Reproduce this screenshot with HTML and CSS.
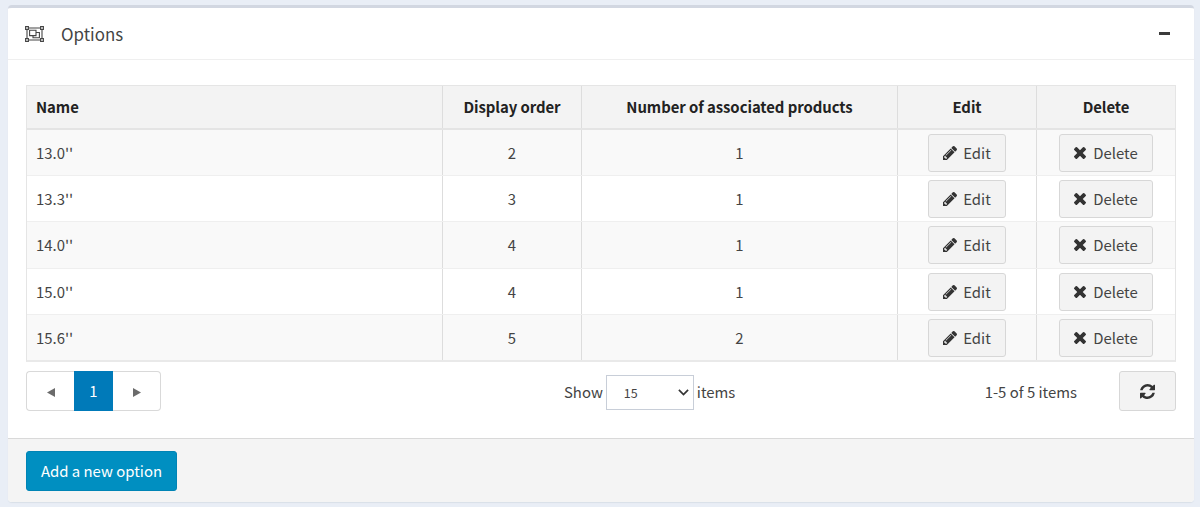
FILE: index.html
```
<!DOCTYPE html>
<html lang="en">
<head>
<meta charset="utf-8">
<title>Options</title>
<link rel="stylesheet" href="styles.css">
</head>
<body>
<svg class="defs" aria-hidden="true">
  <symbol id="pencil" viewBox="128 149 1515 1515"><path d="M491 1536l91-91-235-235-91 91v107h128v128h107zm523-928q0-22-22-22-10 0-17 7l-542 542q-7 7-7 17 0 22 22 22 10 0 17-7l542-542q7-7 7-17zm-54-192l416 416-832 832h-416v-416zm683 96q0 53-37 90l-166 166-416-416 166-165q36-38 90-38 53 0 91 38l235 234q37 39 37 91z"/></symbol>
  <symbol id="times" viewBox="302 366 1188 1188"><path d="M1490 1322q0 40-28 68l-136 136q-28 28-68 28t-68-28l-294-294-294 294q-28 28-68 28t-68-28l-136-136q-28-28-28-68t28-68l294-294-294-294q-28-28-28-68t28-68l136-136q28-28 68-28t68 28l294 294 294-294q28-28 68-28t68 28l136 136q28 28 28 68t-28 68l-294 294 294 294q28 28 28 68z"/></symbol>
</svg>
<section class="card">
  <header class="card-header">
    <svg class="group-icon" viewBox="0 0 19 16" fill="none" stroke="currentColor">
      <path d="M3.400 2h12.200M3.400 14h12.200M2 3.400v9.200M17 3.400v9.200"/>
      <path d="M.6.6h2.8v2.8H.6zM15.6.6h2.8v2.8h-2.8zM.6 12.6h2.8v2.8H.6zM15.6 12.6h2.8v2.8h-2.8z"/>
      <path d="M4.600 4.200h6.400v5.400H4.600zM11 6.500h3.400v5.300H8V9.600"/>
    </svg>
    <h1 class="title">Options</h1>
    <span class="collapse"></span>
  </header>
  <div class="card-body">
    <div class="table">
      <div class="row head"><div class="cell name">Name</div><div class="cell">Display order</div><div class="cell">Number of associated products</div><div class="cell">Edit</div><div class="cell">Delete</div></div>
      <div class="row odd"><div class="cell name">13.0''</div><div class="cell">2</div><div class="cell">1</div><div class="cell"><a class="btn edit"><svg class="i-pencil"><use href="#pencil"/></svg>Edit</a></div><div class="cell"><a class="btn delete"><svg class="i-times"><use href="#times"/></svg>Delete</a></div></div>
      <div class="row"><div class="cell name">13.3''</div><div class="cell">3</div><div class="cell">1</div><div class="cell"><a class="btn edit"><svg class="i-pencil"><use href="#pencil"/></svg>Edit</a></div><div class="cell"><a class="btn delete"><svg class="i-times"><use href="#times"/></svg>Delete</a></div></div>
      <div class="row odd"><div class="cell name">14.0''</div><div class="cell">4</div><div class="cell">1</div><div class="cell"><a class="btn edit"><svg class="i-pencil"><use href="#pencil"/></svg>Edit</a></div><div class="cell"><a class="btn delete"><svg class="i-times"><use href="#times"/></svg>Delete</a></div></div>
      <div class="row"><div class="cell name">15.0''</div><div class="cell">4</div><div class="cell">1</div><div class="cell"><a class="btn edit"><svg class="i-pencil"><use href="#pencil"/></svg>Edit</a></div><div class="cell"><a class="btn delete"><svg class="i-times"><use href="#times"/></svg>Delete</a></div></div>
      <div class="row odd"><div class="cell name">15.6''</div><div class="cell">5</div><div class="cell">2</div><div class="cell"><a class="btn edit"><svg class="i-pencil"><use href="#pencil"/></svg>Edit</a></div><div class="cell"><a class="btn delete"><svg class="i-times"><use href="#times"/></svg>Delete</a></div></div>
    </div>
    <div class="table-footer">
      <nav class="pager">
        <a class="page prev"><svg class="arrow" viewBox="0 0 8 9"><path d="M8 0v9L0 4.500z"/></svg></a>
        <a class="page active">1</a>
        <a class="page next"><svg class="arrow" viewBox="0 0 8 9"><path d="M0 0v9l8-4.500z"/></svg></a>
      </nav>
      <div class="length">
        <span>Show</span>
        <span class="select"><span>15</span><svg class="chevron" viewBox="0 0 11 7"><path d="M.9.9l4.600 4.600L10.100.9"/></svg></span>
        <span>items</span>
      </div>
      <span class="info">1-5 of 5 items</span>
      <a class="btn refresh"><svg class="i-refresh" viewBox="0 0 1536 1536"><path d="M1511 928q0 5-1 7-64 268-268 434.500t-478 166.500q-146 0-282.500-55t-243.500-157l-129 129q-19 19-45 19t-45-19-19-45v-448q0-26 19-45t45-19h448q26 0 45 19t19 45-19 45l-137 137q71 66 161 102t187 36q134 0 250-65t186-179q11-17 53-117 8-23 30-23h192q13 0 22.500 9.500t9.500 22.500zm25-800v448q0 26-19 45t-45 19h-448q-26 0-45-19t-19-45 19-45l138-138q-148-137-349-137-134 0-250 65t-186 179q-11 17-53 117-8 23-30 23h-199q-13 0-22.500-9.500t-9.500-22.500v-7q65-268 270-434.500t480-166.500q146 0 284 55.500t245 156.500l130-129q19-19 45-19t45 19 19 45z"/></svg></a>
    </div>
  </div>
  <footer class="card-footer"><a class="primary">Add a new option</a></footer>
</section>
</body>
</html>
```
FILE: styles.css
```
* { box-sizing: border-box; }
body {
  margin: 0;
  height: 507px;
  padding: 5px 6px 0 8px;
  overflow: hidden;
  background: #e9eef6;
  color: #444;
  font: 14.9px/20px "Noto Sans CJK SC", "Noto Sans", sans-serif;
}
.defs { display: none; }
svg { display: block; flex: none; fill: currentColor; }
.card {
  height: 497px;
  display: flex;
  flex-direction: column;
  overflow: hidden;
  border-top: 3px solid #d2d7e1;
  border-radius: 4px;
  background: #fff;
  box-shadow: 0 1px 1px #d9dfe8;
}
.card-header {
  height: 52px;
  flex: none;
  padding: 0 24px 0 17px;
  display: flex;
  align-items: center;
  border-bottom: 1px solid #efefef;
}
.group-icon { width: 19px; height: 16px; fill: none; stroke-width: 1.1; }
.title { margin: 0 auto 0 17px; font-size: 16.9px; line-height: 24px; font-weight: 400; }
.collapse { width: 11px; height: 3px; background: #3b3b3b; }
.card-body { flex: none; height: 378px; padding: 25px 18px 0; }
.table {
  display: grid;
  grid-template-rows: 44px 46px 46px 47px 46px 45px;
  height: 277px;
  border: 1px solid #e5e5e5;
  border-bottom: 2px solid #e9e9e9;
}
.row {
  display: grid;
  grid-template-columns: 416px 139px 316px 139px 1fr;
  border-bottom: 1px solid #efefef;
}
.row:last-child { border-bottom: 0; }
.odd { background: #f9f9f9; }
.head { background: #f3f3f3; border-bottom: 2px solid #e4e4e4; color: #222; font-weight: 700; letter-spacing: -0.06px; }
.cell { display: flex; align-items: center; justify-content: center; border-right: 1px solid #ddd; }
.cell:last-child { border-right: 0; }
.name { justify-content: flex-start; padding-left: 9px; }
.btn {
  display: flex;
  align-items: center;
  justify-content: center;
  height: 38px;
  border: 1px solid #d7d7d7;
  border-radius: 3px;
  background: #f3f3f3;
}
.edit { width: 78px; gap: 6px; }
.delete { width: 94px; gap: 7px; }
.i-pencil { width: 14px; height: 14px; color: #333; }
.i-times { width: 12px; height: 12px; color: #333; }
.i-refresh { width: 15px; height: 15px; color: #333; }
.table-footer {
  height: 40px;
  margin-top: 9px;
  display: grid;
  grid-template-columns: 135px 580px 1fr 57px;
  align-items: center;
}
.pager {
  display: grid;
  grid-template-columns: 48px 39px 1fr;
  height: 40px;
}
.page { display: flex; align-items: center; justify-content: center; border: 1px solid #d9d9d9; }
.prev { border-right: 0; border-radius: 4px 0 0 4px; }
.next { border-left: 0; border-radius: 0 4px 4px 0; }
.active { border-color: #007ab9; background: #007ab9; color: #fff; }
.arrow { width: 8px; height: 9px; margin-top: 2px; color: #6b6b6b; }
.length { display: flex; align-items: center; gap: 3px; margin-top: 1px; padding-left: 403px; white-space: nowrap; }
.select {
  width: 88px;
  height: 35px;
  margin-top: 2px;
  padding: 0 4px 0 17px;
  display: flex;
  align-items: center;
  justify-content: space-between;
  border: 1px solid #c8ced8;
  font-size: 12.5px;
}
.chevron { width: 11px; height: 7px; fill: none; stroke: #333; stroke-width: 1.7; }
.info { justify-self: end; margin: 2px 42px 0 0; }
.refresh { height: 40px; }
.card-footer {
  flex: 1;
  padding: 12px 18px 0;
  border-top: 1px solid #d9d9d9;
  background: #f4f4f4;
}
.primary {
  display: flex;
  align-items: center;
  justify-content: center;
  width: 151px;
  height: 40px;
  border: 1px solid #0084b5;
  border-radius: 3px;
  background: #008fc1;
  color: #fff;
}
```
